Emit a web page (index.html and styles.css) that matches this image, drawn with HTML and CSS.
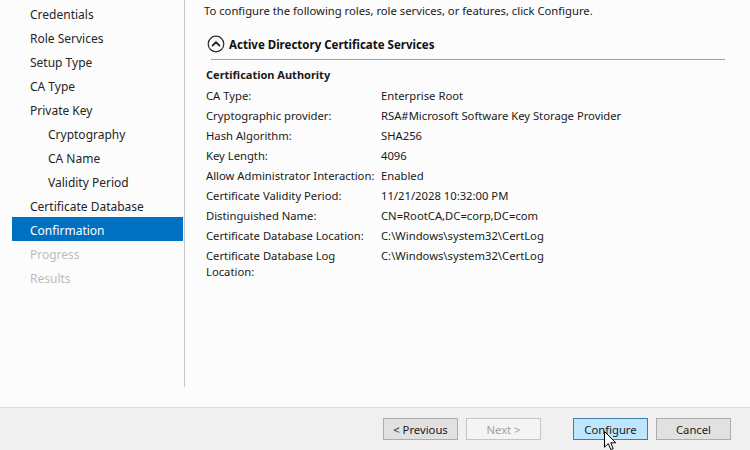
FILE: index.html
```html
<!DOCTYPE html>
<html lang="en">
<head>
<meta charset="utf-8">
<title>Confirmation</title>
<link rel="stylesheet" href="styles.css">
</head>
<body>
<div class="window">
  <div class="main">
    <div class="nav-wrap">
      <ul class="nav">
        <li class="nav-item">Credentials</li>
        <li class="nav-item">Role Services</li>
        <li class="nav-item">Setup Type</li>
        <li class="nav-item">CA Type</li>
        <li class="nav-item">Private Key</li>
        <li class="nav-item sub">Cryptography</li>
        <li class="nav-item sub">CA Name</li>
        <li class="nav-item sub">Validity Period</li>
        <li class="nav-item">Certificate Database</li>
        <li class="nav-item active">Confirmation</li>
        <li class="nav-item disabled">Progress</li>
        <li class="nav-item disabled">Results</li>
      </ul>
    </div>
    <div class="content">
      <p class="intro">To configure the following roles, role services, or features, click Configure.</p>
      <div class="section-head">
        <svg class="collapse-icon" width="18" height="18" viewBox="0 0 18 18" aria-hidden="true">
          <circle cx="9" cy="9" r="7.8" fill="none" stroke="#2b2b2b" stroke-width="1.2"/>
          <path d="M5.6 10.6 L9 7.2 L12.4 10.6" fill="none" stroke="#1a1a1a" stroke-width="1.7" stroke-linecap="round" stroke-linejoin="round"/>
        </svg>
        <span class="section-title">Active Directory Certificate Services</span>
      </div>
      <div class="rule"></div>
      <div class="group">
        <div class="group-title">Certification Authority</div>
        <div class="rows">
          <div class="row"><span class="label">CA Type:</span><span class="value">Enterprise Root</span></div>
          <div class="row"><span class="label">Cryptographic provider:</span><span class="value">RSA#Microsoft Software Key Storage Provider</span></div>
          <div class="row"><span class="label">Hash Algorithm:</span><span class="value">SHA256</span></div>
          <div class="row"><span class="label">Key Length:</span><span class="value">4096</span></div>
          <div class="row"><span class="label">Allow Administrator Interaction:</span><span class="value">Enabled</span></div>
          <div class="row"><span class="label">Certificate Validity Period:</span><span class="value">11/21/2028 10:32:00 PM</span></div>
          <div class="row"><span class="label">Distinguished Name:</span><span class="value">CN=RootCA,DC=corp,DC=com</span></div>
          <div class="row"><span class="label">Certificate Database Location:</span><span class="value">C:\Windows\system32\CertLog</span></div>
          <div class="row"><span class="label">Certificate Database Log Location:</span><span class="value">C:\Windows\system32\CertLog</span></div>
        </div>
      </div>
    </div>
  </div>
  <div class="footer">
    <button class="btn">&lt; Previous</button>
    <button class="btn" disabled>Next &gt;</button>
    <button class="btn primary">Configure</button>
    <button class="btn">Cancel</button>
  </div>
  <svg class="cursor" width="13" height="20" viewBox="0 0 13 20" aria-hidden="true">
    <path d="M0.5 0.5 L0.5 16.2 L4.3 12.6 L6.8 18.6 L9.2 17.6 L6.7 11.8 L11.8 11.8 Z" fill="#ffffff" stroke="#000000" stroke-width="1" stroke-linejoin="miter"/>
  </svg>
</div>
</body>
</html>
```

FILE: styles.css
```css
* {
  box-sizing: border-box;
}

html, body {
  margin: 0;
  padding: 0;
}

body {
  width: 750px;
  height: 450px;
  overflow: hidden;
  background: #fcfcfc;
  font-family: "Noto Sans", "Open Sans", sans-serif;
  font-size: 11.25px;
  color: #1a1a1a;
}

.window {
  position: relative;
  width: 750px;
  height: 450px;
  display: flex;
  flex-direction: column;
}

.main {
  display: flex;
  height: 407px;
}

.nav-wrap {
  width: 185px;
  flex: none;
  padding-bottom: 20px;
}

.nav {
  list-style: none;
  margin: 0;
  padding: 1px 1px 0 0;
  height: 100%;
  border-right: 1px solid #c6c6c6;
}

.nav-item {
  height: 24px;
  line-height: 21px;
  padding-top: 3px;
  margin-left: 12px;
  padding-left: 18px;
  font-size: 12px;
  color: #262626;
  white-space: nowrap;
}

.nav-item.sub {
  padding-left: 36px;
}

.nav-item.active {
  background: #0070c0;
  color: #ffffff;
}

.nav-item.disabled {
  color: #bcbcbc;
}

.content {
  flex: 1;
  padding: 3px 25px 0 19px;
}

.intro {
  margin: 0;
  height: 16px;
  line-height: 16px;
}

.section-head {
  margin-top: 15px;
  height: 20px;
  display: flex;
  align-items: center;
  gap: 4px;
  padding-left: 3px;
}

.collapse-icon {
  flex: none;
}

.section-title {
  font-weight: bold;
  font-size: 11.5px;
  color: #111111;
}

.rule {
  margin-top: 5px;
  margin-left: 7px;
  height: 1px;
  background: #a0a0a0;
}

.group {
  padding-left: 2px;
}

.group-title {
  margin-top: 7px;
  line-height: 16px;
  font-weight: bold;
  font-size: 11px;
  color: #1a1a1a;
}

.rows {
  margin-top: 5px;
  display: flex;
  flex-direction: column;
  gap: 4px;
}

.row {
  display: flex;
  line-height: 16px;
}

.label {
  width: 175px;
  flex: none;
  padding-right: 4px;
}

.value {
  flex: 1;
}

.footer {
  flex: 1;
  background: #f0f0f0;
  border-top: 1px solid #dfdfdf;
  display: flex;
  align-items: flex-start;
  justify-content: flex-end;
  padding: 10px 19px 0 0;
  gap: 8px;
}

.btn {
  width: 75px;
  height: 22px;
  padding: 0;
  font-family: inherit;
  font-size: 11.25px;
  color: #1a1a1a;
  background: #e1e1e1;
  border: 1px solid #adadad;
  border-radius: 0;
}

.btn:disabled {
  background: #f4f4f4;
  border-color: #c4c4c4;
  color: #a0a0a0;
}

.btn.primary {
  margin-left: 24px;
  background: #bee6fd;
  border-color: #3c7fb1;
}

.cursor {
  position: absolute;
  left: 604px;
  top: 431px;
}
```
